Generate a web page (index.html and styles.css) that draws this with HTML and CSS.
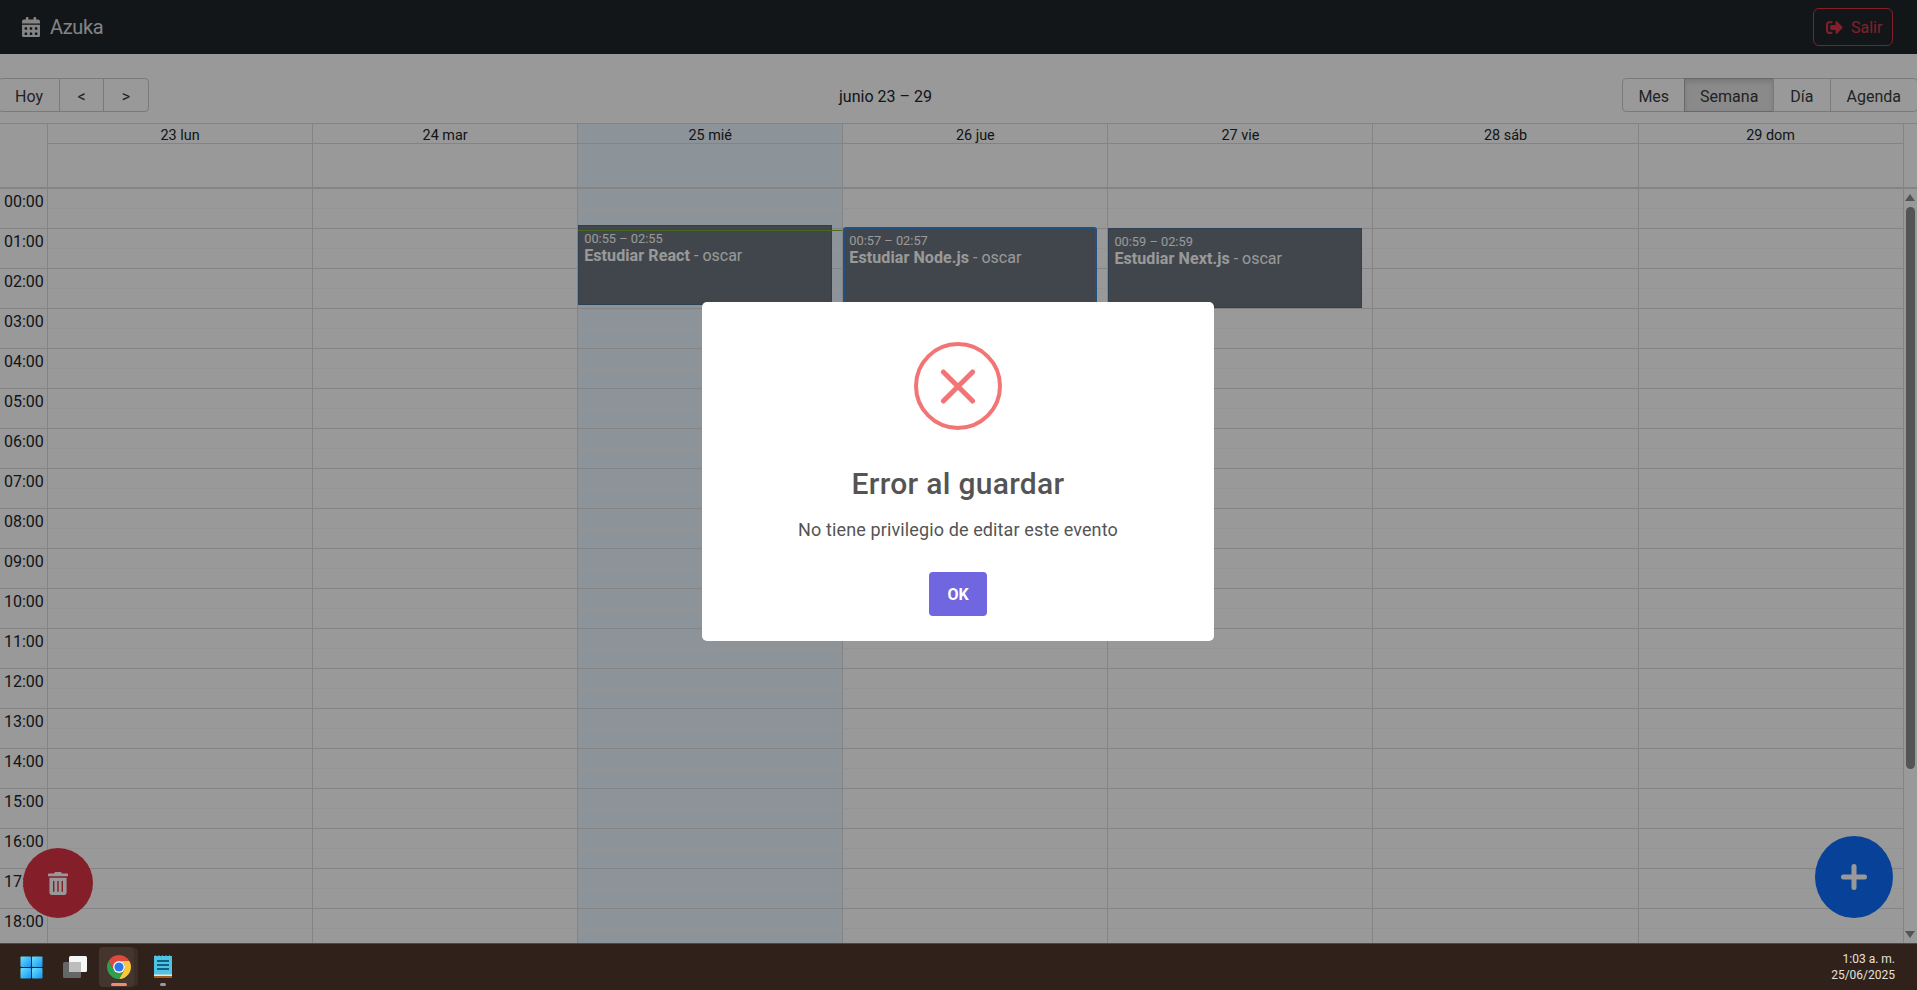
FILE: index.html
```html
<!DOCTYPE html>
<html lang="es">
<head>
  <meta charset="UTF-8">
  <title>Azuka</title>
  <link rel="stylesheet" href="styles.css">
</head>
<body>
  <div class="app">
    <nav class="navbar">
      <span class="brand">
        <svg class="brand-icon" viewBox="0 0 448 512"><path d="M0 464c0 26.5 21.5 48 48 48h352c26.5 0 48-21.5 48-48V192H0v272zm320-196c0-6.6 5.4-12 12-12h40c6.6 0 12 5.4 12 12v40c0 6.6-5.4 12-12 12h-40c-6.6 0-12-5.4-12-12v-40zm0 128c0-6.6 5.4-12 12-12h40c6.6 0 12 5.4 12 12v40c0 6.6-5.4 12-12 12h-40c-6.6 0-12-5.4-12-12v-40zM192 268c0-6.6 5.4-12 12-12h40c6.6 0 12 5.4 12 12v40c0 6.6-5.4 12-12 12h-40c-6.6 0-12-5.4-12-12v-40zm0 128c0-6.6 5.4-12 12-12h40c6.6 0 12 5.4 12 12v40c0 6.6-5.4 12-12 12h-40c-6.6 0-12-5.4-12-12v-40zM64 268c0-6.6 5.4-12 12-12h40c6.6 0 12 5.4 12 12v40c0 6.6-5.4 12-12 12H76c-6.6 0-12-5.4-12-12v-40zm0 128c0-6.6 5.4-12 12-12h40c6.6 0 12 5.4 12 12v40c0 6.6-5.4 12-12 12H76c-6.6 0-12-5.4-12-12v-40zM400 64h-48V16c0-8.8-7.2-16-16-16h-32c-8.8 0-16 7.2-16 16v48H160V16c0-8.8-7.2-16-16-16h-32c-8.8 0-16 7.2-16 16v48H48C21.5 64 0 85.5 0 112v48h448v-48c0-26.5-21.5-48-48-48z"/></svg>
        Azuka
      </span>
      <button class="btn-logout">
        <svg class="logout-icon" viewBox="0 0 512 512"><path d="M497 273L329 441c-15 15-41 4.5-41-17v-96H152c-13.3 0-24-10.7-24-24v-96c0-13.3 10.7-24 24-24h136V88c0-21.4 25.9-32 41-17l168 168c9.3 9.4 9.3 24.6 0 34zM192 436v-40c0-6.6-5.4-12-12-12H96c-17.7 0-32-14.3-32-32V160c0-17.7 14.3-32 32-32h84c6.6 0 12-5.4 12-12V76c0-6.6-5.4-12-12-12H96c-53 0-96 43-96 96v192c0 53 43 96 96 96h84c6.6 0 12-5.4 12-12z"/></svg>
        Salir
      </button>
    </nav>

    <div class="calendar">
      <div class="toolbar">
        <div class="btn-group">
          <button>Hoy</button>
          <button class="btn-arrow">&lt;</button>
          <button class="btn-arrow">&gt;</button>
        </div>
        <span class="toolbar-label">junio 23 – 29</span>
        <div class="btn-group">
          <button class="btn-tight">Mes</button>
          <button class="btn-tight active">Semana</button>
          <button>Día</button>
          <button>Agenda</button>
        </div>
      </div>

      <div class="time-header">
        <div class="gutter-head"></div>
        <div class="head-day"><div class="head-label">23 lun</div></div>
        <div class="head-day"><div class="head-label">24 mar</div></div>
        <div class="head-day today"><div class="head-label">25 mié</div></div>
        <div class="head-day"><div class="head-label">26 jue</div></div>
        <div class="head-day"><div class="head-label">27 vie</div></div>
        <div class="head-day"><div class="head-label">28 sáb</div></div>
        <div class="head-day"><div class="head-label">29 dom</div></div>
        <div class="head-end"></div>
      </div>

      <div class="time-body">
        <div class="gutter">
          <div class="hour">00:00</div>
          <div class="hour">01:00</div>
          <div class="hour">02:00</div>
          <div class="hour">03:00</div>
          <div class="hour">04:00</div>
          <div class="hour">05:00</div>
          <div class="hour">06:00</div>
          <div class="hour">07:00</div>
          <div class="hour">08:00</div>
          <div class="hour">09:00</div>
          <div class="hour">10:00</div>
          <div class="hour">11:00</div>
          <div class="hour">12:00</div>
          <div class="hour">13:00</div>
          <div class="hour">14:00</div>
          <div class="hour">15:00</div>
          <div class="hour">16:00</div>
          <div class="hour">17:00</div>
          <div class="hour">18:00</div>
        </div>
        <div class="day"></div>
        <div class="day"></div>
        <div class="day today">
          <div class="event event-react">
            <div class="event-time">00:55 – 02:55</div>
            <div><b>Estudiar React</b> - oscar</div>
          </div>
          <div class="now-line"></div>
        </div>
        <div class="day">
          <div class="event event-node">
            <div class="event-time">00:57 – 02:57</div>
            <div><b>Estudiar Node.js</b> - oscar</div>
          </div>
        </div>
        <div class="day">
          <div class="event event-next">
            <div class="event-time">00:59 – 02:59</div>
            <div><b>Estudiar Next.js</b> - oscar</div>
          </div>
        </div>
        <div class="day"></div>
        <div class="day"></div>
        <div class="scrollbar">
          <span class="arrow-up"></span>
          <span class="thumb"></span>
          <span class="arrow-down"></span>
        </div>
      </div>
    </div>

    <button class="fab fab-delete">
      <svg class="trash-icon" viewBox="0 0 448 512"><path d="M32 464a48 48 0 0 0 48 48h288a48 48 0 0 0 48-48V128H32zm272-256a16 16 0 0 1 32 0v224a16 16 0 0 1-32 0zm-96 0a16 16 0 0 1 32 0v224a16 16 0 0 1-32 0zm-96 0a16 16 0 0 1 32 0v224a16 16 0 0 1-32 0zM432 32H312l-9.4-18.7A24 24 0 0 0 281.1 0H166.8a23.72 23.72 0 0 0-21.4 13.3L136 32H16A16 16 0 0 0 0 48v32a16 16 0 0 0 16 16h416a16 16 0 0 0 16-16V48a16 16 0 0 0-16-16z"/></svg>
    </button>
    <button class="fab fab-add">
      <svg class="plus-icon" viewBox="0 0 26 26"><path d="M13 2.500v21M2.500 13h21"/></svg>
    </button>

    <!-- Alerta -->
    <div class="overlay">
      <div class="modal">
        <div class="modal-icon">
          <span class="x-line x-left"></span>
          <span class="x-line x-right"></span>
        </div>
        <h2 class="modal-title">Error al guardar</h2>
        <p class="modal-text">No tiene privilegio de editar este evento</p>
        <button class="modal-ok">OK</button>
      </div>
    </div>
  </div>

  <footer class="taskbar">
    <div class="task-apps">
      <span class="task-item">
        <svg class="task-icon win-icon" viewBox="0 0 24 24">
          <defs>
            <linearGradient id="win" x1="0" y1="0" x2="1" y2="1">
              <stop offset="0" stop-color="#6fe0fb"/>
              <stop offset="1" stop-color="#1295f5"/>
            </linearGradient>
          </defs>
          <rect x="0.500" y="0.500" width="11" height="11" rx="1" fill="url(#win)"/>
          <rect x="12.500" y="0.500" width="11" height="11" rx="1" fill="url(#win)"/>
          <rect x="0.500" y="12.500" width="11" height="11" rx="1" fill="url(#win)"/>
          <rect x="12.500" y="12.500" width="11" height="11" rx="1" fill="url(#win)"/>
        </svg>
      </span>
      <span class="task-item">
        <svg class="task-icon" viewBox="0 0 24 24">
          <rect x="6" y="1" width="18" height="16" rx="1.500" fill="#f6f6f6"/>
          <rect x="0" y="7" width="18" height="16" rx="1.500" fill="#666"/>
          <rect x="6" y="7" width="12" height="10" fill="#bdbdbd"/>
        </svg>
      </span>
      <span class="task-item task-active">
        <svg class="task-icon" viewBox="0 0 24 24">
          <path d="M22.390 6A12 12 0 0 0 1.610 6L6.800 15A6 6 0 0 1 12 6Z" fill="#dd4a3d"/>
          <path d="M22.390 6A12 12 0 0 1 12 24L17.200 15A6 6 0 0 0 12 6Z" fill="#fcc934"/>
          <path d="M12 24A12 12 0 0 1 1.610 6L6.800 15A6 6 0 0 0 17.200 15Z" fill="#2f9e4f"/>
          <circle cx="12" cy="12" r="6" fill="#fff"/>
          <circle cx="12" cy="12" r="4.600" fill="#2f76e8"/>
        </svg>
        <span class="task-mark task-mark-on"></span>
      </span>
      <span class="task-item">
        <svg class="task-icon" viewBox="0 0 24 24">
          <rect x="3" y="1" width="18" height="20" fill="#4ec3e6"/>
          <path d="M4.500 1v-1M8 1v-1M11.500 1v-1M15 1v-1M18.500 1v-1" stroke="#2a8fb5" stroke-width="1.200"/>
          <path d="M6 6h12M6 10h12M6 14h12" stroke="#12607f" stroke-width="1.800"/>
          <rect x="3" y="19.500" width="18" height="1.500" fill="#f1e6d0"/>
          <rect x="3" y="21" width="18" height="2" fill="#a8591c"/>
        </svg>
        <span class="task-mark"></span>
      </span>
    </div>
    <div class="clock">
      <div>1:03 a. m.</div>
      <div>25/06/2025</div>
    </div>
  </footer>
</body>
</html>
```

FILE: styles.css
```css
/* Base */
* {
  box-sizing: border-box;
}

body {
  margin: 0;
  height: 990px;
  display: flex;
  flex-direction: column;
  overflow: hidden;
  font-family: Roboto, "Open Sans", sans-serif;
  font-size: 16px;
  color: #212529;
  background-color: #fff;
}

button {
  font-family: inherit;
}

.app {
  position: relative;
  height: 943px;
  overflow: hidden;
}

/* Navbar */
.navbar {
  height: 54px;
  margin-bottom: 24px;
  padding: 0 24px 0 22px;
  display: flex;
  align-items: center;
  justify-content: space-between;
  background-color: #212529;
}

.brand {
  display: flex;
  align-items: center;
  gap: 10px;
  font-size: 20px;
  letter-spacing: -0.4px;
  color: rgba(255, 255, 255, 0.85);
}

.brand-icon {
  width: 18px;
  height: 20.5px;
  fill: currentColor;
}

.btn-logout {
  display: flex;
  align-items: center;
  gap: 8px;
  width: 80px;
  height: 38px;
  padding: 0 12px;
  font-size: 16px;
  color: #dc3545;
  background: none;
  border: 1px solid #dc3545;
  border-radius: 6px;
}

.logout-icon {
  width: 17px;
  height: 17px;
  flex-shrink: 0;
  fill: currentColor;
}

/* Toolbar del calendario */
.toolbar {
  display: flex;
  align-items: center;
  height: 34px;
  margin: 0 -1px 11px -2px;
}

.toolbar-label {
  flex-grow: 1;
  padding-top: 2px;
  text-align: center;
  font-size: 16px;
}

.btn-group {
  display: flex;
}

.btn-group button {
  height: 34px;
  padding: 2px 16px 0;
  font-size: 16px;
  color: #373a3c;
  background: none;
  border: 1px solid #ccc;
  margin-left: -1px;
}

.btn-group button.btn-arrow {
  padding: 2px 17.5px 0;
}

.btn-group button.btn-tight {
  padding: 2px 15px 0;
}

.btn-group button:first-child {
  margin-left: 0;
  border-radius: 4px 0 0 4px;
}

.btn-group button:last-child {
  border-radius: 0 4px 4px 0;
}

.btn-group button.active {
  background-color: #e6e6e6;
  border-color: #adadad;
  box-shadow: inset 0 3px 5px rgba(0, 0, 0, 0.125);
}

/* Cabecera de la semana */
.time-header {
  display: flex;
  height: 66px;
  border-top: 1px solid #ddd;
  border-bottom: 2px solid #ddd;
}

.gutter-head {
  width: 47px;
}

.head-day {
  width: 265.1px;
  border-left: 1px solid #ddd;
}

.head-end {
  flex: 1;
  border-left: 1px solid #ddd;
}

.head-label {
  height: 20px;
  border-bottom: 1px solid #ddd;
  font-size: 14.4px;
  line-height: 23px;
  text-align: center;
}

.today {
  background-color: #eaf6ff;
}

/* Cuerpo de la semana */
.time-body {
  display: flex;
  height: 754px;
  overflow: hidden;
}

.gutter {
  width: 47px;
  flex-shrink: 0;
}

.hour {
  height: 40px;
  padding-left: 4px;
  font-size: 16px;
  line-height: 25px;
  border-bottom: 1px solid #ddd;
}

.day {
  position: relative;
  width: 265.1px;
  flex-shrink: 0;
  border-left: 1px solid #ddd;
  background-image: linear-gradient(
    to bottom,
    transparent 19px,
    #f7f7f7 19px,
    #f7f7f7 20px,
    transparent 20px,
    transparent 39px,
    #ddd 39px
  );
  background-size: 100% 40px;
}

.event {
  position: absolute;
  left: 0;
  width: 254px;
  height: 80px;
  padding: 5px 5px 0;
  font-size: 16px;
  line-height: 18px;
  color: #fff;
  background-color: #6c757d;
  border: 1px solid #4d6c8a;
}

.event b {
  letter-spacing: 0.1px;
}

.event-react {
  top: 36px;
}

.event-node {
  top: 38px;
  padding: 4px 4px 0;
  border: 2px solid #3b85d8;
  border-radius: 3px;
}

.event-next {
  top: 39px;
}

.event-time {
  font-size: 12.8px;
  line-height: 16px;
}

.now-line {
  position: absolute;
  top: 41px;
  left: 0;
  width: 100%;
  height: 1px;
  background-color: #74ad31;
}

.scrollbar {
  flex: 1;
  display: flex;
  flex-direction: column;
  align-items: center;
  padding: 5px 0 5px;
  border-left: 1px solid #ddd;
}

.arrow-up {
  border-left: 5px solid transparent;
  border-right: 5px solid transparent;
  border-bottom: 7px solid #8d8d8d;
}

.thumb {
  width: 9px;
  height: 562px;
  margin-top: 6px;
  background-color: #8d8d8d;
  border-radius: 5px;
}

.arrow-down {
  margin-top: auto;
  border-left: 5px solid transparent;
  border-right: 5px solid transparent;
  border-top: 7px solid #8d8d8d;
}

/* Botones flotantes */
.fab {
  position: absolute;
  display: flex;
  align-items: center;
  justify-content: center;
  padding: 0;
  border: none;
  border-radius: 50%;
}

.fab-delete {
  left: 23px;
  top: 848px;
  width: 70px;
  height: 70px;
  background-color: #dc3545;
}

.fab-add {
  left: 1815px;
  top: 836px;
  width: 78px;
  height: 82px;
  background-color: #0d6efd;
}

.trash-icon {
  width: 20px;
  height: 23px;
  fill: #fff;
}

.plus-icon {
  width: 26px;
  height: 26px;
  fill: none;
  stroke: #fff;
  stroke-width: 5px;
  stroke-linecap: round;
}

/* Alerta */
.overlay {
  position: absolute;
  inset: 0;
  padding-right: 1px;
  display: flex;
  align-items: center;
  justify-content: center;
  background-color: rgba(0, 0, 0, 0.4);
}

.modal {
  width: 512px;
  height: 339px;
  padding-top: 40px;
  display: flex;
  flex-direction: column;
  align-items: center;
  background-color: #fff;
  border-radius: 5px;
}

.modal-icon {
  position: relative;
  width: 88px;
  height: 88px;
  flex-shrink: 0;
  border: 4px solid #f27474;
  border-radius: 50%;
}

.x-line {
  position: absolute;
  top: 37.5px;
  left: 17px;
  width: 46px;
  height: 5px;
  background-color: #f27474;
  border-radius: 2px;
}

.x-left {
  transform: rotate(45deg);
}

.x-right {
  transform: rotate(-45deg);
}

.modal-title {
  margin: 34px 0 0;
  font-size: 30px;
  font-weight: 500;
  line-height: 40px;
  letter-spacing: 0.3px;
  color: #545454;
}

.modal-text {
  margin: 14px 0 0;
  font-size: 18px;
  line-height: 24px;
  letter-spacing: 0.12px;
  color: #545454;
}

.modal-ok {
  width: 58px;
  height: 44px;
  margin-top: 30px;
  padding: 0;
  font-size: 16px;
  font-weight: 700;
  color: #fff;
  background-color: #7066e0;
  border: none;
  border-radius: 4px;
}

/* Barra de tareas */
.taskbar {
  height: 47px;
  padding: 0 22px 0 9px;
  display: flex;
  align-items: center;
  justify-content: space-between;
  background-color: #30221b;
  border-top: 1px solid #55463e;
}

.task-apps {
  display: flex;
  align-items: center;
}

.task-item {
  position: relative;
  display: flex;
  align-items: center;
  justify-content: center;
  width: 44px;
  height: 40px;
}

/* Ventana agrupada detras del icono activo */
.task-active::before {
  content: "";
  position: absolute;
  top: 0;
  bottom: 0;
  left: 2px;
  width: 35px;
  background-color: #44352d;
  border-radius: 4px;
  box-shadow: 5px 0 0 -1px #3c2d25;
}

.task-icon {
  position: relative;
  width: 24px;
  height: 24px;
}

.win-icon {
  width: 23px;
  height: 23px;
}

.task-mark {
  position: absolute;
  left: 50%;
  bottom: 1px;
  width: 6px;
  height: 3px;
  margin-left: -3px;
  background-color: #9a9a9a;
  border-radius: 2px;
}

.task-mark-on {
  width: 16px;
  margin-left: -8px;
  background-color: #f08a76;
}

.clock {
  font-size: 12px;
  line-height: 16px;
  text-align: right;
  color: #e4e0dd;
}
```
